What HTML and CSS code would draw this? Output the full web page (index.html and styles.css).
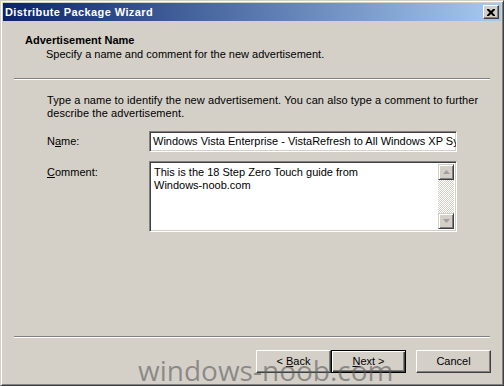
FILE: index.html
```html
<!DOCTYPE html>
<html>
<head>
<meta charset="utf-8">
<link rel="stylesheet" href="styles.css">
</head>
<body>
<div class="window">
  <div class="titlebar">
    <span class="title">Distribute Package Wizard</span>
    <span class="close"><svg width="8" height="7" viewBox="0 0 8 7"><path d="M0 0h2l2 2 2-2h2v1l-2.5 2.5L8 6v1H6L4 5 2 7H0V6l2.5-2.5L0 1z" fill="#000"/></svg></span>
  </div>
  <div class="header">
    <div class="h-title">Advertisement Name</div>
    <div class="h-sub">Specify a name and comment for the new advertisement.</div>
  </div>
  <div class="sep"></div>
  <div class="content">
    <p class="desc">Type a name to identify the new advertisement. You can also type a comment to further<br>describe the advertisement.</p>
    <div class="row">
      <span class="label">N<u>a</u>me:</span>
      <div class="edit">Windows Vista Enterprise - VistaRefresh to All Windows XP Systems</div>
    </div>
    <div class="row row-memo">
      <span class="label"><u>C</u>omment:</span>
      <div class="memo">
        <div class="memo-text">This is the 18 Step Zero Touch guide from<br>Windows-noob.com</div>
        <div class="scrollbar">
          <span class="sb-btn"><svg width="7" height="4" viewBox="0 0 7 4"><path d="M3.5 0L7 4H0z" fill="#a0a0a0"/></svg></span>
          <span class="sb-track"></span>
          <span class="sb-btn"><svg width="7" height="4" viewBox="0 0 7 4"><path d="M0 0h7L3.5 4z" fill="#a0a0a0"/></svg></span>
        </div>
      </div>
    </div>
  </div>
  <div class="sep"></div>
  <div class="buttons">
    <span class="btn"><span>&lt; <u>B</u>ack</span></span>
    <span class="btn btn-default"><span><u>N</u>ext &gt;</span></span>
    <span class="btn btn-cancel"><span>Cancel</span></span>
  </div>
  <div class="watermark">windows-noob.com</div>
</div>
</body>
</html>
```
FILE: styles.css
```css
* { box-sizing: border-box; }
html, body { margin: 0; padding: 0; }
body { width: 504px; height: 386px; overflow: hidden; background: #d4d0c8; }

.window {
  position: relative;
  width: 504px;
  height: 386px;
  background: #d4d0c8;
  border: 1px solid;
  border-color: #d4d0c8 #404040 #404040 #d4d0c8;
  box-shadow: inset 1px 1px #fff, inset -1px -1px #808080;
  padding: 2px;
  display: flex;
  flex-direction: column;
  font-family: "Liberation Sans", Arial, sans-serif;
  font-size: 11px;
  line-height: 13px;
  color: #000;
}

.titlebar {
  height: 18px;
  flex: none;
  display: flex;
  align-items: center;
  justify-content: space-between;
  padding: 0 2px 0 2px;
  background: linear-gradient(to right, #0a246a, #a6caf0);
}
.title {
  color: #fff;
  font-weight: bold;
  font-size: 11px;
  letter-spacing: 0.4px;
}
.close {
  width: 16px;
  height: 14px;
  display: flex;
  align-items: center;
  justify-content: center;
  background: #d4d0c8;
  border: 1px solid;
  border-color: #fff #404040 #404040 #fff;
  box-shadow: inset -1px -1px #808080;
}

.header {
  flex: none;
  height: 57px;
  padding: 13px 0 0 22px;
}
.h-title { font-weight: bold; }
.h-sub { margin-top: 1px; padding-left: 21px; }

.sep {
  flex: none;
  height: 2px;
  margin: 0 11px;
  border-top: 1px solid #808080;
  border-bottom: 1px solid #fff;
}

.content {
  flex: 1;
  padding: 14px 0 0 44px;
}
.desc { margin: 0; letter-spacing: 0.08px; }

.row {
  display: flex;
  align-items: center;
  margin-top: 11px;
}
.row-memo { align-items: flex-start; margin-top: 9px; }
.label { width: 102px; flex: none; }
.row-memo .label { padding-top: 5px; }

.edit, .memo {
  width: 308px;
  background: #fff;
  border: 1px solid;
  border-color: #808080 #fff #fff #808080;
  box-shadow: inset 1px 1px #404040, inset -1px -1px #d4d0c8;
}
.edit {
  height: 21px;
  padding: 3px 3px 0 3px;
  white-space: nowrap;
  overflow: hidden;
}
.memo {
  height: 71px;
  padding: 2px;
  display: flex;
}
.memo-text { flex: 1; padding: 2px 2px; }
.scrollbar {
  width: 16px;
  display: flex;
  flex-direction: column;
}
.sb-btn {
  height: 16px;
  flex: none;
  display: flex;
  align-items: center;
  justify-content: center;
  background: #d4d0c8;
  border: 1px solid;
  border-color: #d4d0c8 #404040 #404040 #d4d0c8;
  box-shadow: inset 1px 1px #fff, inset -1px -1px #808080;
}
.sb-track {
  flex: 1;
  background-color: #fff;
  background-image: repeating-conic-gradient(#d4d0c8 0 25%, #fff 0 50%);
  background-size: 2px 2px;
}

.buttons {
  flex: none;
  display: flex;
  justify-content: flex-end;
  padding: 12px 10px 10px 0;
}
.btn {
  width: 75px;
  height: 23px;
  display: flex;
  align-items: center;
  justify-content: center;
  background: #d4d0c8;
  border: 1px solid;
  border-color: #fff #404040 #404040 #fff;
  box-shadow: inset -1px -1px #808080;
}
.btn-default {
  border: 1px solid #000;
  box-shadow: inset 1px 1px #fff, inset -1px -1px #404040, inset -2px -2px #808080;
}
.btn-cancel { margin-left: 10px; }

.watermark {
  position: absolute;
  left: 137px;
  top: 355px;
  font-family: "Open Sans", sans-serif;
  font-size: 28px;
  line-height: 1;
  color: rgba(90, 90, 90, 0.6);
  white-space: nowrap;
  pointer-events: none;
}
```
